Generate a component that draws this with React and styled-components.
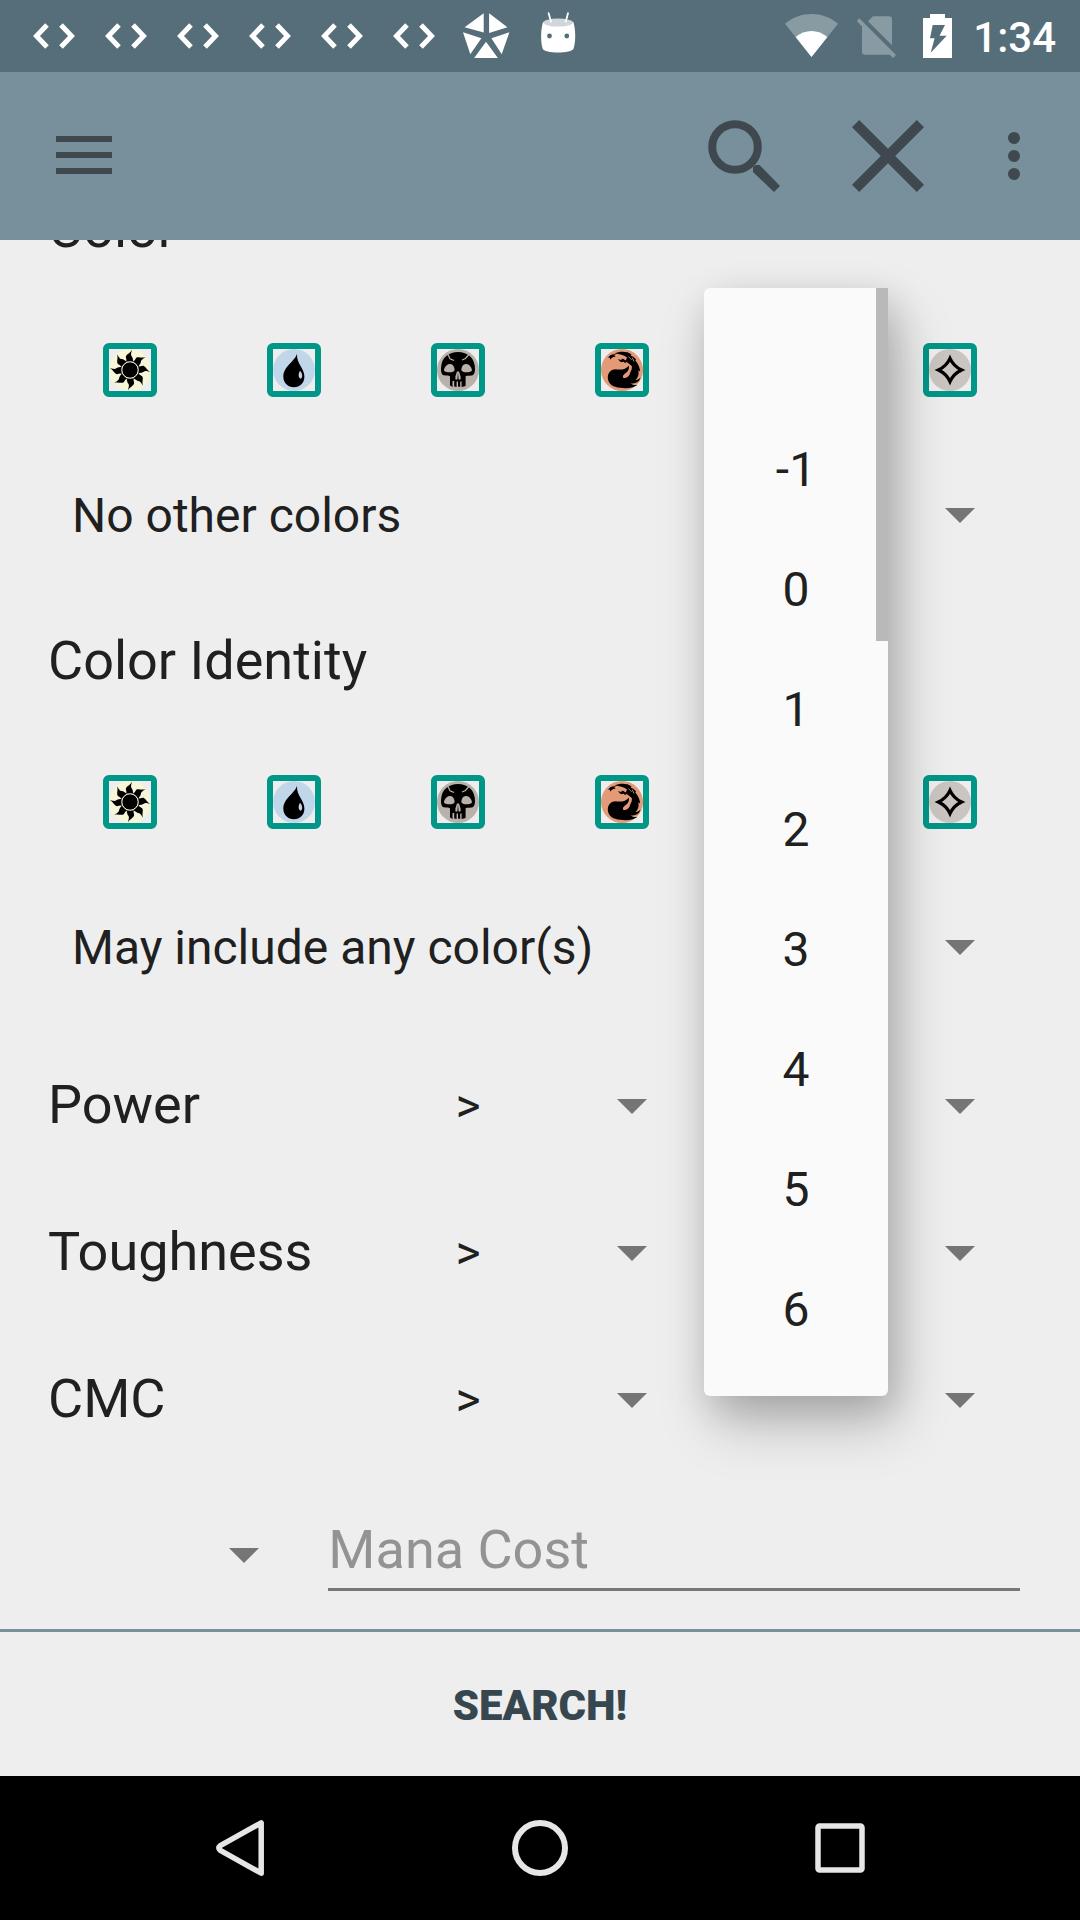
import React from "react";
import styled, { createGlobalStyle } from "styled-components";

const GlobalStyle = createGlobalStyle`
  *, *::before, *::after { box-sizing: border-box; }
  body { margin: 0; background: #eeeeee; }
  button, input, select { font-family: inherit; color: inherit; margin: 0; }
`;

const Screen = styled.div`
  min-height: 100vh;
  display: flex;
  flex-direction: column;
  background: #eeeeee;
  color: #202020;
  font-family: Roboto, "Liberation Sans", sans-serif;
`;

const StatusBar = styled.div`
  height: 72px;
  display: flex;
  justify-content: space-between;
  padding: 0 24px 0 18px;
  background: #566e7a;
  color: #ffffff;
`;

const StatusGroup = styled.div`
  display: flex;
  align-items: center;
  gap: ${(p) => p.$gap}px;
`;

const Clock = styled.time`
  padding-top: 3px;
  font-size: 42px;
  line-height: 48px;
  font-weight: 500;
`;

const Glyph = styled.svg`
  display: block;
  flex: none;
`;

const Toolbar = styled.header`
  position: relative;
  z-index: 2;
  height: 168px;
  display: flex;
  justify-content: space-between;
  padding-right: 12px;
  background: #78909c;
  color: #3e484e;
`;

const ToolbarActions = styled.div`
  display: flex;
`;

const ToolbarButton = styled.button`
  width: ${(p) => p.$width}px;
  display: grid;
  place-items: center;
  padding: 0;
  border: 0;
  background: none;
`;

const Body = styled.main`
  position: relative;
  flex: 1;
  display: flex;
  flex-direction: column;
`;

const ScrollArea = styled.div`
  flex: 1;
  overflow: hidden;
`;

const Form = styled.form`
  margin-top: -41px;
  padding: 0 48px 38px;
`;

const Section = styled.section`
  padding-bottom: 42px;
`;

const FieldLabel = styled.div`
  font-size: 54px;
  line-height: 60px;
  padding-bottom: 4px;
`;

const ColorRow = styled.div`
  height: 146px;
  margin-top: 34px;
  display: grid;
  grid-template-columns: repeat(6, 1fr);
  place-items: center;
`;

const ColorToggle = styled.label`
  display: grid;
  place-items: center;

  > * {
    grid-area: 1 / 1;
  }
`;

const ColorCheckbox = styled.input`
  appearance: none;
  width: 54px;
  height: 54px;
  border: 6px solid #009688;
  border-radius: 6px;
`;

const SpinnerBox = styled.div`
  position: relative;
  height: 146px;
  display: flex;
  align-items: center;

  &::after {
    content: "";
    position: absolute;
    right: 57px;
    top: calc(50% - 8px);
    border: 15px solid transparent;
    border-top-color: #757575;
    border-bottom: 0;
    pointer-events: none;
  }
`;

const SpinnerSelect = styled.select`
  appearance: none;
  width: 100%;
  height: 72px;
  padding: 0 144px 2px ${(p) => (p.$centered ? 0 : 24)}px;
  border: 0;
  background: none;
  font-size: 48px;
  text-align-last: ${(p) => (p.$centered ? "center" : "left")};
`;

const StatRows = styled.div`
  margin-top: -30px;
`;

const StatRow = styled.div`
  height: 147px;
  display: grid;
  grid-template-columns: repeat(3, minmax(0, 1fr));
  align-items: center;
`;

const ManaRow = styled.div`
  display: grid;
  grid-template-columns: minmax(0, 3fr) minmax(0, 8fr);
  align-items: end;

  ${SpinnerBox} {
    height: 70px;
  }
`;

const ManaInput = styled.input`
  height: 74px;
  margin: 43px 12px 0;
  padding: 0 0 7px;
  border: 0;
  border-bottom: 3px solid #777777;
  border-radius: 0;
  background: none;
  font-size: 54px;
  outline: none;

  &::placeholder {
    color: #939393;
    opacity: 1;
  }
`;

const SearchButton = styled.button`
  height: 147px;
  width: 100%;
  padding: 2px 0 0;
  border: 0;
  border-top: 3px solid #78909c;
  background: #eeeeee;
  color: #37474f;
  font-size: 42px;
  font-weight: 900;
`;

const Popup = styled.div`
  position: absolute;
  z-index: 1;
  top: 48px;
  left: calc(48px + (100% - 96px) * 2 / 3);
  width: 184px;
  border-radius: 6px;
  background: #fafafa;
  box-shadow: 10px 28px 56px rgba(0, 0, 0, 0.22), 6px 12px 36px rgba(0, 0, 0, 0.14);
`;

const PopupList = styled.ul`
  list-style: none;
  margin: 0;
  padding: 1px 0 27px;
`;

const PopupOption = styled.li`
  height: 120px;
  display: grid;
  place-items: center;
  font-size: 48px;
`;

const ScrollThumb = styled.div`
  position: absolute;
  top: 0;
  right: 0;
  width: 12px;
  height: 353px;
  background: #b9b9b9;
`;

const NavBar = styled.nav`
  height: 144px;
  display: grid;
  grid-template-columns: repeat(3, 1fr);
  padding: 0 90px;
  background: #000000;
`;

const NavButton = styled.button`
  display: grid;
  place-items: center;
  padding: 0;
  border: 0;
  background: none;
`;

const CodeIcon = () => (
  <Glyph width="72" height="72" viewBox="0 0 72 72" fill="none" stroke="#fff" strokeWidth="5">
    <path d="M29 25 18.5 36 29 47M43 25 53.5 36 43 47" />
  </Glyph>
);

const FacetIcon = () => (
  <Glyph width="72" height="72" viewBox="0 0 72 72" fill="#fff">
    <path d="M33.7 13.3V32.5L14.6 27.3ZM39.1 13.3V33L57.4 27.3ZM13 32.3 31.4 38.3 20.3 54.3ZM59.4 32.3 41.4 38.3 51.7 54.3ZM36 41.7 47.9 58H24.2Z" />
  </Glyph>
);

const RobotIcon = () => (
  <Glyph width="72" height="72" viewBox="0 0 72 72">
    <path d="M21 22C18.6 30 18.6 42 20.6 48.5C22 53.8 50 53.8 51.6 48.5C53.8 42 53.8 30 51.4 22Z" fill="#fff" />
    <ellipse cx="36.2" cy="22.6" rx="14.8" ry="4" fill="#d0d7db" />
    <path d="M26.6 13.2 29 21.5M46 13.2 43.8 21.5" stroke="#fff" strokeWidth="1.8" strokeLinecap="round" />
    <circle cx="27.5" cy="36" r="2.4" fill="#566e7a" />
    <circle cx="44.8" cy="36" r="2.4" fill="#566e7a" />
  </Glyph>
);

const WifiIcon = () => (
  <Glyph width="54" height="72" viewBox="0 0 54 72">
    <path d="M0 23.7C15 10.8 38 10.8 53 23.7L26.5 57Z" fill="#889ba3" />
    <path d="M10.6 37C20 29 33 29 42.4 37L26.5 57Z" fill="#fff" />
  </Glyph>
);

const NoSimIcon = () => (
  <Glyph width="48" height="72" viewBox="0 0 48 72" fill="#889ba3">
    <path d="M11 21.2 16 16.3H32A3 3 0 0 1 35 19.3V45.2Z" />
    <path d="M2.3 18.3 39 55 36 58 32.8 54.8H8A3 3 0 0 1 5 51.8V26.5L-.3 21Z" />
  </Glyph>
);

const BatteryIcon = () => (
  <Glyph width="32" height="72" viewBox="0 0 32 72">
    <path
      fill="#fff"
      fillRule="evenodd"
      d="M0 18H7V14H22V18H29V58H0ZM9.7 25 7 38.3H11.6L7.7 52.7 23.7 35.7H16.5L22 25Z"
    />
  </Glyph>
);

const MenuIcon = () => (
  <Glyph width="56" height="40" viewBox="0 0 56 40" fill="currentColor">
    <path d="M0 0H56V6H0ZM0 16H56V22H0ZM0 32H56V38H0Z" />
  </Glyph>
);

const SearchIcon = () => (
  <Glyph width="72" height="72" viewBox="0 0 72 72">
    <circle cx="27" cy="27" r="22.8" fill="none" stroke="currentColor" strokeWidth="8" />
    <path d="M45 52V47L47.5 45H51.5L72 66 66 72Z" fill="currentColor" />
  </Glyph>
);

const CloseIcon = () => (
  <Glyph width="72" height="72" viewBox="0 0 72 72" fill="currentColor">
    <path d="M7.2 0 36 28.8 64.8 0 72 7.2 43.2 36 72 64.8 64.8 72 36 43.2 7.2 72 0 64.8 28.8 36 0 7.2Z" />
  </Glyph>
);

const MoreIcon = () => (
  <Glyph width="12" height="48" viewBox="0 0 12 48" fill="currentColor">
    <circle cx="6" cy="6" r="6" />
    <circle cx="6" cy="24" r="6" />
    <circle cx="6" cy="42" r="6" />
  </Glyph>
);

const FLAME = "M17 12.8C18.4 10.5 16 8.8 17.2 6.8C18.8 4.6 21.2 4 23 .8C21.8 5 21.8 6 22.8 7.4C24.2 9 23.6 10.8 24.6 12.8Z";

const manaArt = {
  White: (
    <>
      <circle cx="21" cy="21" r="21" fill="#f8f6d8" />
      {[0, 45, 90, 135, 180, 225, 270, 315].map((angle) => (
        <path key={angle} d={FLAME} transform={`rotate(${angle} 21 21)`} />
      ))}
      <circle cx="21" cy="21" r="8.2" stroke="#f8f6d8" strokeWidth="1" />
    </>
  ),
  Blue: (
    <>
      <circle cx="21" cy="21" r="21" fill="#c1d7e9" />
      <path d="M24 4.4C22.5 12 10.3 17 10.3 27.5C10.3 34 15 38.3 20.8 38.3C27 38.3 31.4 34 31.4 27.5C31.4 19 23.4 15 24 4.4Z" />
      <path d="M27 21.8C30 25 29.6 29 27.6 29.8C25.2 28.4 25 25.5 27 21.8Z" fill="#c1d7e9" />
    </>
  ),
  Black: (
    <>
      <circle cx="21" cy="21" r="21" fill="#bab1ab" />
      <path d="M21 3C12 3 5.4 8.5 4.4 16C3.6 20.5 4 24.5 6 26C8.5 27.3 12 26 13 27.5V36.5L15.5 38V32H17.2V37.5L19.6 38V32.5H21V37.5L23.2 38V32.5H24.6V38L28.6 37V27.5C29.6 26 33.5 27.3 36 26C38 24.5 38.4 20.5 37.6 16C36.6 8.5 30 3 21 3Z" />
      <path d="M7 21.5C7.4 17.5 10.3 15 13 15C16 15 17.6 18 17.6 21C17.6 24 8 24 7 21.5ZM35 21.5C34.6 17.5 31.7 15 29 15C26 15 24.4 18 24.4 21C24.4 24 34 24 35 21.5Z" fill="#bab1ab" />
      <path d="M20 22.5 18.4 27.5V30.5H20.4L21 23.5 21.6 30.5H23.6V27.5L22 22.5Z" fill="#bab1ab" />
      <path d="M11 5.5 13 9.8 17 11.5M31.5 6 28.5 9.5 25 11" fill="none" stroke="#bab1ab" strokeWidth="1.2" />
    </>
  ),
  Red: (
    <>
      <circle cx="21" cy="21" r="21" fill="#e49977" />
      <path d="M13.5 4.4C19 2.2 26 2.2 30.5 5.4L29.6 6.8C32 7.4 34 8.6 35 10.6L34.4 11.6C37.4 15 39 19 39 22.6L37.2 21.6C38.3 25 37.4 28.4 34.6 31C36 31.2 38 30.4 39.6 28.6C38 33.6 34 35 29.5 34.2C31.5 36 34 36.4 36.6 35.8C32 39.4 25 39.8 19.6 38.8C11.6 38.6 6.8 34.4 6.8 28.6C6.8 23.6 10.6 20 15.6 20.4C20 20.8 22 20.8 24.6 19.2C26.4 18.2 27.2 17.6 27.8 16.4C28.6 20 27 22.4 24 24.6C21.8 26.4 21.4 28 22.4 29C26 29.4 28.6 26.8 29 24L30.6 20.6 31 17.6C29.6 15.4 27.8 14.6 25.8 12.9L24 14 22.6 12.8 20.6 13.2C19 12.6 17.8 11.4 17.2 10L20 11L21.6 9.6 24.8 11.4 26 8.4C22.6 5.6 18.6 5 13.5 4.4Z" />
      <path d="M7 8.6C9 5.8 11.6 4.8 15 5.4L13.2 6.6 14.8 7.8C12 7.6 10.6 8.6 9.4 10.8L8.8 8.8Z" />
      <path d="M27.5 7.6 30.6 10.8M31.2 8.6 33 12.6" fill="none" stroke="#e49977" strokeWidth=".8" />
    </>
  ),
  Green: (
    <>
      <circle cx="21" cy="21" r="21" fill="#a3c095" />
      <path d="M21 5A9 9 0 0 0 12 13A7 7 0 1 0 16 25L19 27V32L15 37H27L23 32V27L26 25A7 7 0 1 0 30 13A9 9 0 0 0 21 5Z" />
    </>
  ),
  Colorless: (
    <>
      <circle cx="21" cy="21" r="21" fill="#cac5c0" />
      <path
        d="M21 9.4Q24.6 17.4 32.6 21Q24.6 24.6 21 32.6Q17.4 24.6 9.4 21Q17.4 17.4 21 9.4Z"
        fill="none"
        stroke="#000"
        strokeWidth="3.2"
        strokeMiterlimit="8"
      />
    </>
  ),
};

function ColorPicker({ title }) {
  return (
    <ColorRow role="group" aria-label={title}>
      {Object.keys(manaArt).map((name) => (
        <ColorToggle key={name}>
          <ColorCheckbox type="checkbox" aria-label={name} />
          <Glyph width="42" height="42" viewBox="0 0 42 42" aria-hidden="true">
            {manaArt[name]}
          </Glyph>
        </ColorToggle>
      ))}
    </ColorRow>
  );
}

function Spinner({ label, value = "", centered = false }) {
  return (
    <SpinnerBox>
      <SpinnerSelect aria-label={label} defaultValue={value} $centered={centered}>
        <option value={value}>{value}</option>
      </SpinnerSelect>
    </SpinnerBox>
  );
}

const colorSections = [
  { title: "Color", rule: "No other colors" },
  { title: "Color Identity", rule: "May include any color(s)" },
];
const stats = ["Power", "Toughness", "CMC"];
const choices = ["", "-1", "0", "1", "2", "3", "4", "5", "6"];

export default function App() {
  return (
    <Screen>
      <GlobalStyle />
      <StatusBar>
        <StatusGroup $gap={0}>
          {[1, 2, 3, 4, 5, 6].map((n) => (
            <CodeIcon key={n} />
          ))}
          <FacetIcon />
          <RobotIcon />
        </StatusGroup>
        <StatusGroup $gap={18}>
          <WifiIcon />
          <NoSimIcon />
          <BatteryIcon />
          <Clock>1:34</Clock>
        </StatusGroup>
      </StatusBar>

      <Toolbar>
        <ToolbarButton $width={168} aria-label="Open menu">
          <MenuIcon />
        </ToolbarButton>
        <ToolbarActions>
          <ToolbarButton $width={144} aria-label="Search">
            <SearchIcon />
          </ToolbarButton>
          <ToolbarButton $width={144} aria-label="Clear">
            <CloseIcon />
          </ToolbarButton>
          <ToolbarButton $width={108} aria-label="More options">
            <MoreIcon />
          </ToolbarButton>
        </ToolbarActions>
      </Toolbar>

      <Body>
        <ScrollArea>
          <Form id="card-search" onSubmit={(e) => e.preventDefault()}>
            {colorSections.map(({ title, rule }) => (
              <Section key={title}>
                <FieldLabel>{title}</FieldLabel>
                <ColorPicker title={title} />
                <Spinner label={`${title} rule`} value={rule} />
              </Section>
            ))}
            <StatRows>
              {stats.map((stat) => (
                <StatRow key={stat}>
                  <FieldLabel>{stat}</FieldLabel>
                  <Spinner label={`${stat} comparison`} value=">" centered />
                  <Spinner label={`${stat} value`} centered />
                </StatRow>
              ))}
            </StatRows>
            <ManaRow>
              <Spinner label="Mana cost comparison" />
              <ManaInput type="text" placeholder="Mana Cost" aria-label="Mana Cost" />
            </ManaRow>
          </Form>
        </ScrollArea>
        <SearchButton type="submit" form="card-search">
          SEARCH!
        </SearchButton>
        <Popup>
          <PopupList role="listbox" aria-label="Power value">
            {choices.map((choice) => (
              <PopupOption key={choice} role="option" aria-selected={choice === ""}>
                {choice}
              </PopupOption>
            ))}
          </PopupList>
          <ScrollThumb />
        </Popup>
      </Body>

      <NavBar>
        <NavButton aria-label="Back">
          <Glyph width="60" height="60" viewBox="0 0 60 60" fill="none" stroke="#e6e6e6" strokeWidth="5.5" strokeLinejoin="round">
            <path d="M51.2 4.8V55.2L10.3 32.4Q7.3 30 10.3 27.6Z" />
          </Glyph>
        </NavButton>
        <NavButton aria-label="Home">
          <Glyph width="60" height="60" viewBox="0 0 60 60" fill="none" stroke="#e6e6e6" strokeWidth="6">
            <circle cx="30" cy="30" r="25" />
          </Glyph>
        </NavButton>
        <NavButton aria-label="Recent apps">
          <Glyph width="60" height="60" viewBox="0 0 60 60" fill="none" stroke="#e6e6e6" strokeWidth="5.5">
            <rect x="8" y="8" width="44" height="44" rx="1.5" />
          </Glyph>
        </NavButton>
      </NavBar>
    </Screen>
  );
}
